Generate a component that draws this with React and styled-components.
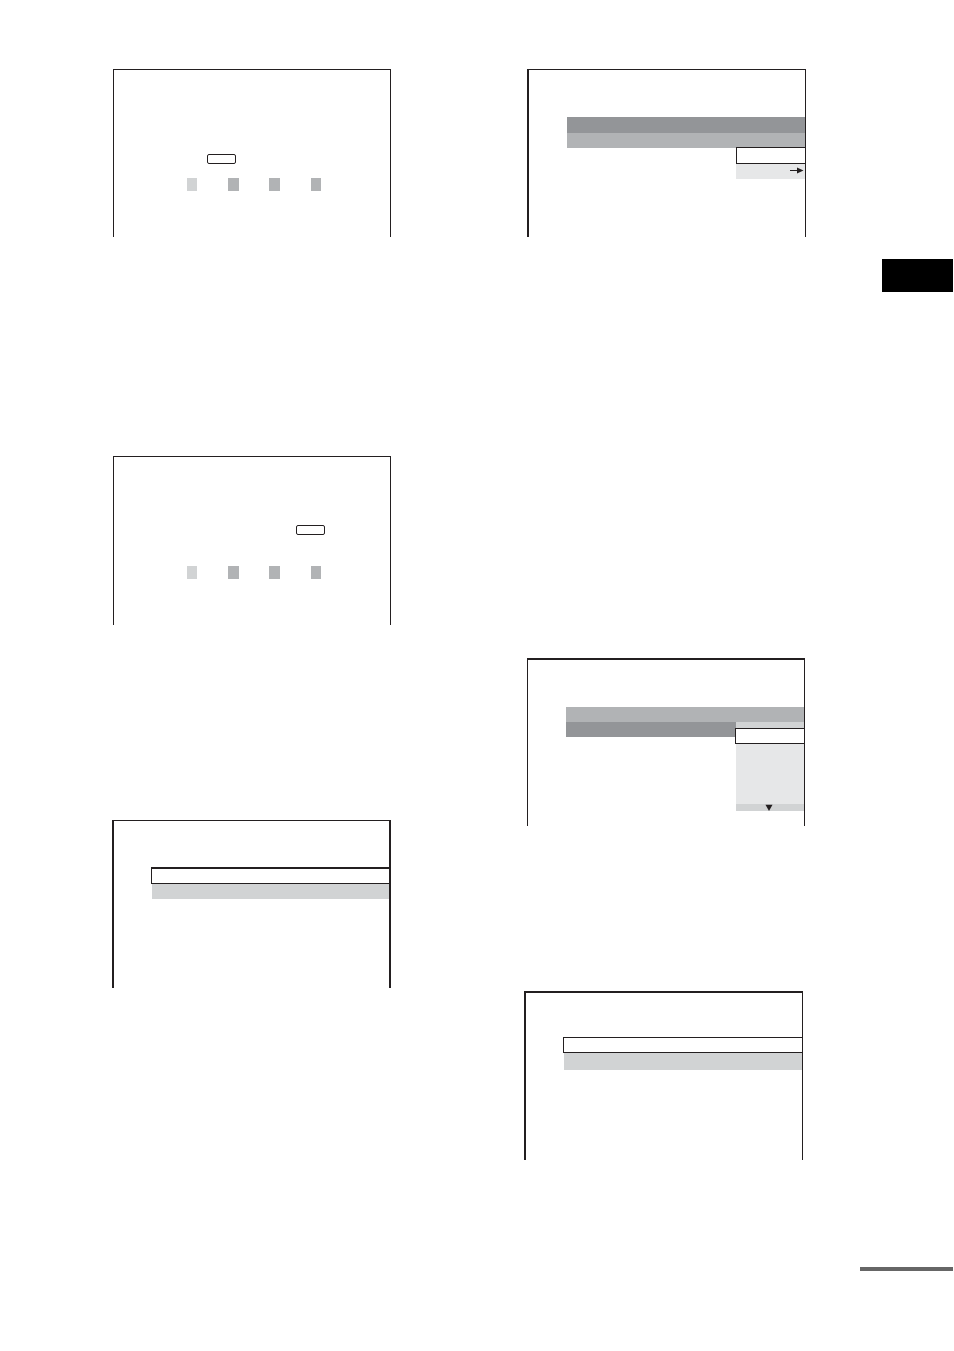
import styled, { createGlobalStyle } from "styled-components";

const ink = "#231f20";
const dark = "#939598";
const mid = "#b1b3b5";
const light = "#d1d3d4";
const pale = "#e6e7e8";

const GlobalStyle = createGlobalStyle`
  * {
    box-sizing: border-box;
  }

  body {
    margin: 0;
    background: #fff;
    font-family: "Liberation Sans", Arial, sans-serif;
  }
`;

const Page = styled.main`
  display: grid;
  grid-template-columns: 112fr 279fr 133fr 282fr 147fr;
  min-height: 100vh;
  padding-right: 1px;
`;

const Column = styled.div`
  grid-column: ${(props) => props.$column};
  display: flex;
  flex-direction: column;
  padding-top: 69px;
`;

const Side = styled.aside`
  grid-column: 5;
  display: flex;
  flex-direction: column;
  align-items: flex-end;
  gap: 975px;
  padding-top: 259px;
`;

const ChapterTab = styled.div`
  width: 71px;
  height: 33px;
  background: #000;
`;

const FooterRule = styled.div`
  width: 93px;
  height: 4px;
  background: #666;
`;

// TV screen outline, open at the bottom
const Screen = styled.section`
  min-height: ${(props) => props.$height || 168}px;
  margin: ${(props) => props.$margin || "0"};
  padding-top: ${(props) => props.$pad}px;
  border: 0 solid ${ink};
  border-width: ${(props) => props.$lines};
`;

const Key = styled.button`
  display: block;
  width: 29px;
  height: 10px;
  margin: 0 0 0 ${(props) => props.$left}px;
  padding: 0;
  background: #fff;
  border: 1px solid ${ink};
  border-radius: 2px;
`;

const Swatches = styled.div`
  display: flex;
  justify-content: space-between;
  width: 134px;
  margin: ${(props) => props.$top}px 0 0 73px;
`;

const Swatch = styled.span`
  width: ${(props) => props.$width}px;
  height: 13px;
  background: ${(props) => props.$color};
`;

const List = styled.div`
  position: relative;
  margin-left: 38px;
`;

const Row = styled.div`
  height: ${(props) => props.$height || 15}px;
  background: ${(props) => props.$color};
`;

const SelectedRow = styled.div`
  height: ${(props) => props.$height || 16}px;
  margin-left: ${(props) => (props.$flush ? 0 : -1)}px;
  background: #fff;
  border: 1px solid ${ink};
  border-top-width: ${(props) => props.$topLine || 1}px;
  border-right: 0;
`;

const Menu = styled.div`
  position: absolute;
  top: ${(props) => props.$top}px;
  right: 0;
  width: ${(props) => props.$width}px;
`;

const ArrowRow = styled(Row)`
  display: flex;
  justify-content: ${(props) => props.$align};
  padding-right: 1px;

  svg {
    display: block;
  }
`;

const swatches = [
  { width: 10, color: light },
  { width: 11, color: mid },
  { width: 11, color: mid },
  { width: 10, color: mid },
];

const ColorKeys = ({ top }) => {
  return (
    <Swatches $top={top}>
      {swatches.map((item, key) => {
        return <Swatch key={key} $width={item.width} $color={item.color} />;
      })}
    </Swatches>
  );
};

const RightArrow = () => (
  <svg width="14" height="15" viewBox="0 0 14 15" aria-hidden="true">
    <path d="M0 6.5H9" stroke={ink} />
    <path d="M7 3.5L13.5 6.5L7 9.5Z" fill={ink} />
  </svg>
);

const DownArrow = () => (
  <svg width="9" height="7" viewBox="0 0 9 7" aria-hidden="true">
    <path d="M0.5 0.7H7.5L4 7Z" fill={ink} />
  </svg>
);

const App = () => {
  return (
    <>
      <GlobalStyle />
      <Page>
        <Column $column={2}>
          <Screen $pad={84} $lines="1px 1px 0" $margin="0 0 219px 1px">
            <Key type="button" $left={93} />
            <ColorKeys top={14} />
          </Screen>
          <Screen
            $pad={68}
            $height={169}
            $lines="1px 1px 0"
            $margin="0 0 195px 1px"
          >
            <Key type="button" $left={182} />
            <ColorKeys top={31} />
          </Screen>
          <Screen $pad={46} $lines="1px 2px 0">
            <List>
              <SelectedRow $height={17} $topLine={2} />
              <Row $color={light} />
            </List>
          </Screen>
        </Column>

        <Column $column={4}>
          <Screen $pad={47} $lines="1px 1px 0 2px" $margin="0 0 421px 3px">
            <List>
              <Row $height={16} $color={dark} />
              <Row $color={mid} />
              <Menu $top={30} $width={69}>
                <SelectedRow $height={17} $flush />
                <ArrowRow $color={pale} $align="flex-end">
                  <RightArrow />
                </ArrowRow>
              </Menu>
            </List>
          </Screen>
          <Screen $pad={47} $lines="2px 1px 0" $margin="0 1px 165px 3px">
            <List>
              <Row $color={mid} />
              <Row $color={dark} />
              <Menu $top={15} $width={68}>
                <Row $height={6} $color={light} />
                <SelectedRow />
                <Row $height={60} $color={pale} />
                <ArrowRow $height={7} $color={light} $align="center">
                  <DownArrow />
                </ArrowRow>
              </Menu>
            </List>
          </Screen>
          <Screen
            $pad={44}
            $height={169}
            $lines="2px 1px 0 2px"
            $margin="0 3px 0 0"
          >
            <List>
              <SelectedRow />
              <Row $height={17} $color={light} />
            </List>
          </Screen>
        </Column>

        <Side>
          <ChapterTab />
          <FooterRule />
        </Side>
      </Page>
    </>
  );
};

export default App;
